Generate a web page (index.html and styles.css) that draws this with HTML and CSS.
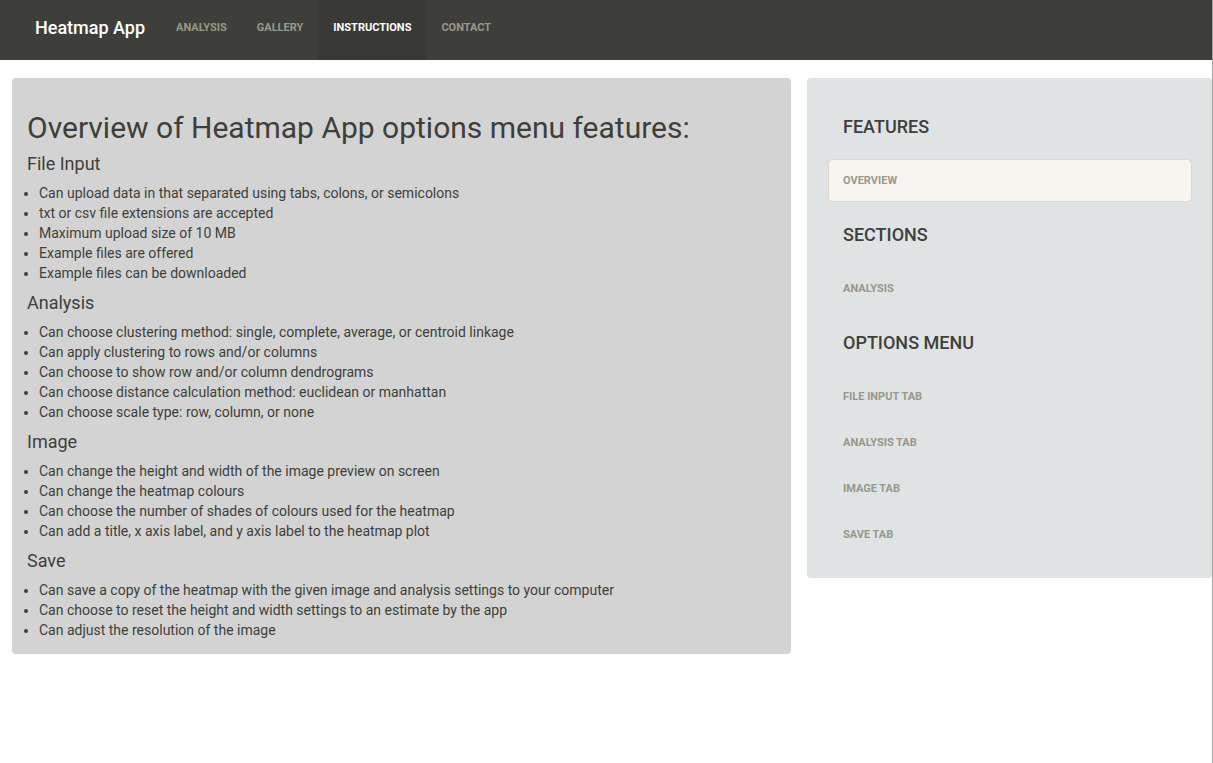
FILE: index.html
```html
<!DOCTYPE html>
<html lang="en">
<head>
<meta charset="utf-8">
<title>Heatmap App</title>
<link rel="stylesheet" href="styles.css">
</head>
<body>
<nav class="navbar">
  <a class="brand" href="#">Heatmap App</a>
  <ul class="nav">
    <li><a href="#">Analysis</a></li>
    <li><a href="#">Gallery</a></li>
    <li class="active"><a href="#">Instructions</a></li>
    <li><a href="#">Contact</a></li>
  </ul>
</nav>
<main class="page">
  <section class="well main-well">
    <h1 class="title">Overview of Heatmap App options menu features:</h1>
    <h4>File Input</h4>
    <ul class="list">
      <li>Can upload data in that separated using tabs, colons, or semicolons</li>
      <li>txt or csv file extensions are accepted</li>
      <li>Maximum upload size of 10 MB</li>
      <li>Example files are offered</li>
      <li>Example files can be downloaded</li>
    </ul>
    <h4>Analysis</h4>
    <ul class="list">
      <li>Can choose clustering method: single, complete, average, or centroid linkage</li>
      <li>Can apply clustering to rows and/or columns</li>
      <li>Can choose to show row and/or column dendrograms</li>
      <li>Can choose distance calculation method: euclidean or manhattan</li>
      <li>Can choose scale type: row, column, or none</li>
    </ul>
    <h4>Image</h4>
    <ul class="list">
      <li>Can change the height and width of the image preview on screen</li>
      <li>Can change the heatmap colours</li>
      <li>Can choose the number of shades of colours used for the heatmap</li>
      <li>Can add a title, x axis label, and y axis label to the heatmap plot</li>
    </ul>
    <h4>Save</h4>
    <ul class="list last">
      <li>Can save a copy of the heatmap with the given image and analysis settings to your computer</li>
      <li>Can choose to reset the height and width settings to an estimate by the app</li>
      <li>Can adjust the resolution of the image</li>
    </ul>
  </section>
  <aside class="well side-well">
    <h4 class="side-head first">Features</h4>
    <ul class="pills">
      <li class="active"><a href="#">Overview</a></li>
    </ul>
    <h4 class="side-head">Sections</h4>
    <ul class="pills">
      <li><a href="#">Analysis</a></li>
    </ul>
    <h4 class="side-head">Options Menu</h4>
    <ul class="pills">
      <li><a href="#">File Input Tab</a></li>
      <li><a href="#">Analysis Tab</a></li>
      <li><a href="#">Image Tab</a></li>
      <li><a href="#">Save Tab</a></li>
    </ul>
  </aside>
</main>
</body>
</html>
```

FILE: styles.css
```css
html, body {
  margin: 0;
  padding: 0;
}
body {
  width: 1213px;
  min-height: 763px;
  box-sizing: border-box;
  border-right: 1px solid #a3a3a3;
  background: #ffffff;
  font-family: Roboto, "Liberation Sans", sans-serif;
  font-size: 14px;
  color: #3e3f3a;
}
a { text-decoration: none; }

.navbar {
  height: 60px;
  box-sizing: border-box;
  padding: 0 0 6px 35px;
  background: #3e3f3a;
  display: flex;
  align-items: stretch;
}
.brand {
  display: flex;
  align-items: center;
  color: #ffffff;
  font-size: 18px;
  font-weight: 500;
  margin-right: 16px;
}
.nav {
  display: flex;
  list-style: none;
  margin: 0 0 -6px;
  padding: 0;
}
.nav li { display: flex; }
.nav a {
  display: flex;
  align-items: center;
  padding: 0 15px 6px;
  color: #98978b;
  font-size: 11px;
  font-weight: 700;
  text-transform: uppercase;
}
.nav li.active a {
  background: #393a35;
  color: #ffffff;
}

.page {
  display: grid;
  grid-template-columns: 779px 405px;
  column-gap: 16px;
  align-items: start;
  padding: 18px 0 0 12px;
}
.well {
  border-radius: 4px;
}
.main-well {
  background: #d3d3d3;
  padding: 14px 15px 14px 15px;
}
.title {
  font-size: 30px;
  font-weight: 400;
  line-height: 33px;
  margin: 19px 0 10px;
}
.main-well h4 {
  font-size: 18px;
  font-weight: 400;
  line-height: 20px;
  margin: 8px 0 9px;
}
.list {
  margin: 0 0 10px;
  padding-left: 12px;
  line-height: 20px;
}
.list.last { margin-bottom: 0; }

.side-well {
  background: #e0e3e4;
  padding: 19px 20px 22px 21px;
}
.side-head {
  margin: 22px 0;
  padding: 0 15px;
  font-size: 18px;
  font-weight: 500;
  line-height: 21px;
  text-transform: uppercase;
  color: #3e3f3a;
}
.side-head.first { margin-top: 19px; }
.pills {
  list-style: none;
  margin: 0;
  padding: 0;
  display: flex;
  flex-direction: column;
  gap: 3px;
}
.pills a {
  display: block;
  padding: 14px 14px;
  line-height: 13px;
  border: 1px solid transparent;
  border-radius: 4px;
  font-size: 11px;
  font-weight: 700;
  text-transform: uppercase;
  color: #98978b;
}
.pills li.active a {
  background: #f8f5f0;
  border-color: #dfd7ca;
}
```
